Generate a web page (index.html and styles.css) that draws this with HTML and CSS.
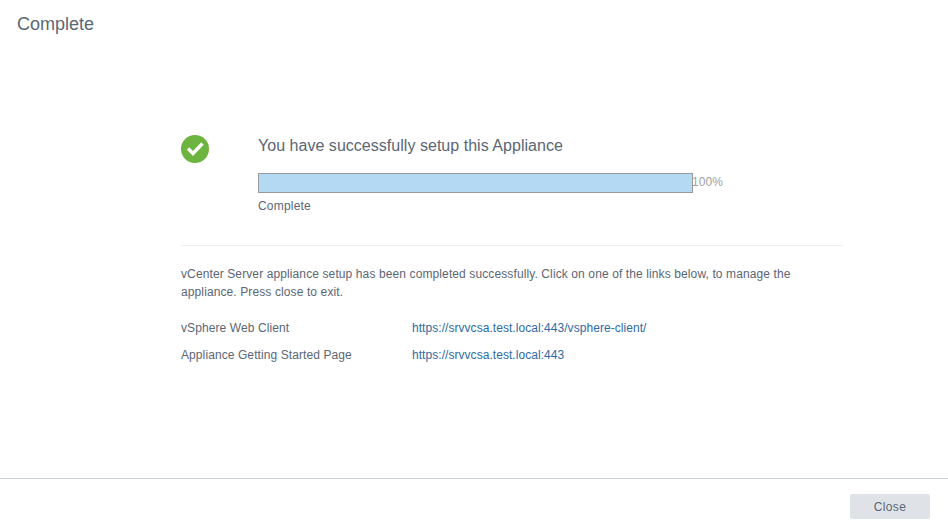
FILE: index.html
```html
<!DOCTYPE html>
<html lang="en">
  <head>
    <meta charset="utf-8" />
    <title>Complete</title>
    <link rel="stylesheet" href="styles.css">
  </head>
  <body>
    <div class="dialog">
      <h1 class="dialog-title">Complete</h1>

      <div class="dialog-body">
        <div class="status">
          <svg class="status-icon" width="28" height="28" viewBox="0 0 28 28">
            <circle cx="14" cy="14" r="14" fill="#6db33f" />
            <path d="M7 13.5l5 5 9.5-10" fill="none" stroke="#fff" stroke-width="3.4" />
          </svg>
          <div class="status-main">
            <h2 class="status-title">You have successfully setup this Appliance</h2>
            <div class="progress-row">
              <div class="progress-bar"></div>
              <span class="progress-value">100%</span>
            </div>
            <div class="progress-label">Complete</div>
          </div>
        </div>

        <p class="message">vCenter Server appliance setup has been completed successfully. Click on one of the links below, to manage the appliance. Press close to exit.</p>

        <div class="link-row">
          <span class="link-name">vSphere Web Client</span>
          <a class="link" href="#">https://srvvcsa.test.local:443/vsphere-client/</a>
        </div>
        <div class="link-row">
          <span class="link-name">Appliance Getting Started Page</span>
          <a class="link" href="#">https://srvvcsa.test.local:443</a>
        </div>
      </div>

      <div class="dialog-footer">
        <button class="close-btn" type="button">Close</button>
      </div>
    </div>
  </body>
</html>
```

FILE: styles.css
```css
/* Page */
html, body {
  margin: 0;
  padding: 0;
  background: #fff;
}

.dialog {
  width: 948px;
  height: 529px;
  display: flex;
  flex-direction: column;
  font-family: "Liberation Sans", Arial, sans-serif;
  color: #5b6675;
  overflow: hidden;
}

.dialog-title {
  margin: 0;
  padding: 14px 17px 0;
  height: 40px;
  box-sizing: border-box;
  font-size: 18px;
  line-height: 21px;
  font-weight: 400;
}

/* Main content */
.dialog-body {
  flex: 1;
  margin: 0 105px 0 181px;
  padding-top: 95px;
}

.status {
  display: flex;
  height: 110px;
  border-bottom: 1px solid #eeeeee;
}

.status-icon {
  margin-right: 49px;
}

.status-title {
  margin: 1px 0 0;
  font-size: 16px;
  line-height: 20px;
  font-weight: 400;
  letter-spacing: 0.03px;
}

.progress-row {
  display: flex;
  margin-top: 17px;
}

.progress-bar {
  width: 433px;
  height: 18px;
  background: #b3d9f3;
  border: 1px solid #999;
}

.progress-value {
  margin-left: -1px;
  font-size: 12px;
  line-height: 18px;
  color: #a0a0a0;
  letter-spacing: 0.05px;
}

.progress-label {
  margin-top: 4px;
  font-size: 12px;
  line-height: 18px;
  letter-spacing: 0.2px;
}

.message {
  margin: 19px 0 18px;
  max-width: 625px;
  font-size: 12px;
  line-height: 18px;
  letter-spacing: 0.11px;
}

.link-row {
  display: flex;
  font-size: 12px;
  line-height: 18px;
  margin-bottom: 9px;
}

.link-name {
  width: 231px;
  letter-spacing: 0.09px;
}

.link {
  color: #2f6aa3;
  text-decoration: none;
  letter-spacing: 0.05px;
}

/* Footer */
.dialog-footer {
  height: 51px;
  display: flex;
  justify-content: flex-end;
  padding: 15px 18px 0;
  box-sizing: border-box;
  border-top: 1px solid #c6d2d6;
}

.close-btn {
  width: 80px;
  height: 25px;
  border: 0;
  border-radius: 2px;
  background: #dfe3e8;
  color: #5b6675;
  font-family: inherit;
  font-size: 12px;
  letter-spacing: 0.4px;
}
```
